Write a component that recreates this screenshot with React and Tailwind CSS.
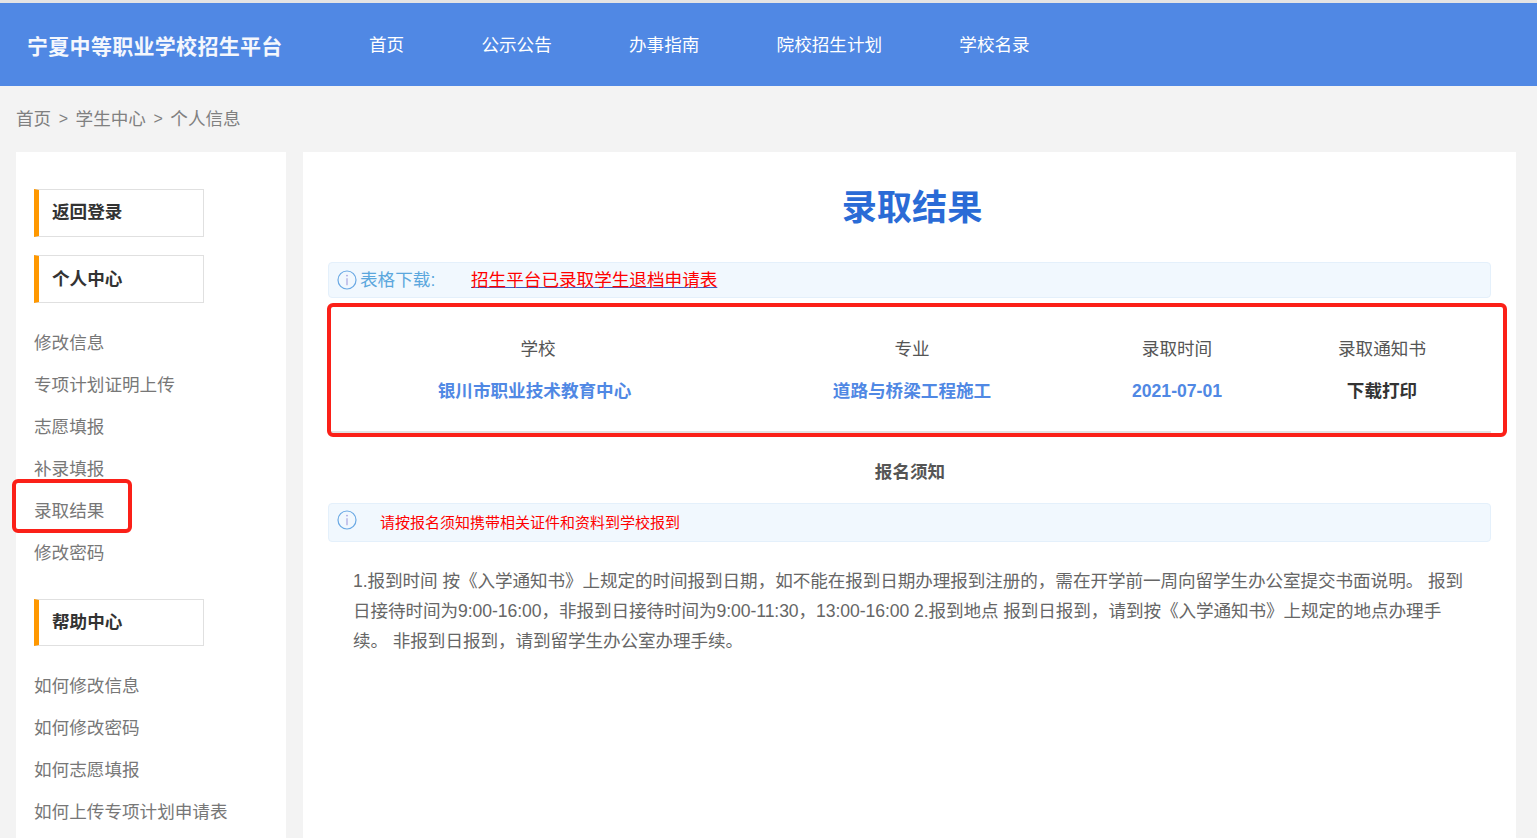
import React from 'react';

const navItems = ['首页', '公示公告', '办事指南', '院校招生计划', '学校名录'];
const personalLinks = ['修改信息', '专项计划证明上传', '志愿填报', '补录填报', '录取结果', '修改密码'];
const helpLinks = ['如何修改信息', '如何修改密码', '如何志愿填报', '如何上传专项计划申请表'];

const columns = [
  { title: '学校', value: '银川市职业技术教育中心', width: 'w-[418px]', titleClass: 'pl-[2px]', valueClass: 'text-[#5088e4] pr-[5px]' },
  { title: '专业', value: '道路与桥梁工程施工', width: 'w-[332px]', titleClass: '', valueClass: 'text-[#5088e4]' },
  { title: '录取时间', value: '2021-07-01', width: 'w-[198px]', titleClass: '', valueClass: 'text-[#5088e4]' },
  { title: '录取通知书', value: '下载打印', width: 'w-[212px]', titleClass: '', valueClass: 'text-[#333333]' },
];

function InfoIcon() {
  return (
    <svg className="w-5 h-5 shrink-0" viewBox="0 0 20 20" fill="none">
      <circle cx="10" cy="10" r="9" stroke="#6aa9e4" strokeWidth="1.2" />
      <circle cx="10" cy="5.6" r="0.9" fill="#a9a4e0" />
      <path d="M10 8.2v7" stroke="#a9a4e0" strokeWidth="1.2" />
    </svg>
  );
}

function SideHeading({ children, className }) {
  return (
    <div className={`w-[170px] h-12 bg-white border border-[#e0e0e0] border-l-[5px] border-l-[#ff9800] pl-[13px] flex items-center text-[17.6px] font-bold text-[#333333] ${className}`}>
      {children}
    </div>
  );
}

function SideLinks({ links, className }) {
  return (
    <ul className={className}>
      {links.map(link => (
        <li key={link} className="h-[42px] leading-[42px] text-[17.6px] text-[#777777]">{link}</li>
      ))}
    </ul>
  );
}

export default function App() {
  return (
    <div
      className="h-[838px] overflow-hidden bg-[#f3f3f3] border-t-[3px] border-t-[#e4e4e4]"
      style={{ fontFamily: '"Liberation Sans", "Noto Sans CJK SC", sans-serif' }}
    >
      <header className="h-[83px] bg-[#5088e4] flex items-center pl-[27px] text-white">
        <div className="w-[342px] pt-1 text-[21px] tracking-[0.3px] font-bold text-[#f4f7fd]">宁夏中等职业学校招生平台</div>
        <nav className="flex gap-[77.2px] pt-px text-[17.6px]">
          {navItems.map(item => <span key={item}>{item}</span>)}
        </nav>
      </header>

      <div className="h-[66px] pl-4 flex items-center text-[17.6px] text-[#808080]">
        <span>首页</span>
        <span className="mx-[7.5px] text-base">&gt;</span>
        <span>学生中心</span>
        <span className="mx-[7.5px] text-base">&gt;</span>
        <span>个人信息</span>
      </div>

      <div className="flex pl-4 gap-[17px] items-start">
        <aside className="relative w-[270px] h-[700px] bg-white pt-[37px] pl-[18px]">
          <SideHeading className="pb-px">返回登录</SideHeading>
          <SideHeading className="mt-[18px]">个人中心</SideHeading>
          <SideLinks links={personalLinks} className="mt-[19px]" />
          <SideHeading className="mt-[25px] h-[47px]">帮助中心</SideHeading>
          <SideLinks links={helpLinks} className="mt-[19px]" />
          <div className="absolute left-[-4px] top-[327px] w-[120px] h-[54px] border-[4px] border-[#fb2018] rounded-[6px]" />
        </aside>

        <main className="relative w-[1213px] h-[700px] bg-white pl-[25px]">
          <h1 className="h-[110px] pt-[2px] pr-[20px] flex items-center justify-center text-[35.2px] font-bold text-[#2a6bd6]">录取结果</h1>

          <div className="w-[1163px] h-9 bg-[#f1f8fe] border border-[#e4f0fb] rounded-sm flex items-center pl-2 text-[17.6px]">
            <InfoIcon />
            <span className="ml-[3px] w-[111px] text-[#5ba7dd]">表格下载:</span>
            <a className="text-[#ff0000] underline decoration-[#3f5fc0]">招生平台已录取学生退档申请表</a>
          </div>

          <div className="w-[1163px] h-[130px] mt-[5px] border-b-2 border-b-[#e2e2e2] flex text-center">
            {columns.map(col => (
              <div key={col.title} className={col.width}>
                <div className={`mt-[31px] h-[30px] leading-[30px] text-[17.6px] text-[#555555] ${col.titleClass}`}>{col.title}</div>
                <div className={`mt-3 h-[30px] leading-[30px] text-[17.6px] font-bold ${col.valueClass}`}>{col.value}</div>
              </div>
            ))}
          </div>

          <div className="h-[70px] pt-[8px] pr-[24px] flex items-center justify-center text-[17.6px] font-bold text-[#555555]">报名须知</div>

          <div className="w-[1163px] h-[39px] bg-[#f1f8fe] border border-[#e4f0fb] rounded-sm flex items-center pl-2 pb-[6px] text-[15px] text-[#ff0000]">
            <InfoIcon />
            <span className="ml-[23px] mt-2">请按报名须知携带相关证件和资料到学校报到</span>
          </div>

          <p className="w-[1115px] mt-[24px] ml-[25px] text-[17.6px] tracking-[-0.08px] leading-[30px] text-[#666666]">
            1.报到时间 按《入学通知书》上规定的时间报到日期，如不能在报到日期办理报到注册的，需在开学前一周向留学生办公室提交书面说明。 报到日接待时间为9:00-16:00，非报到日接待时间为9:00-11:30，13:00-16:00 2.报到地点 报到日报到，请到按《入学通知书》上规定的地点办理手续。 非报到日报到，请到留学生办公室办理手续。
          </p>

          <div className="absolute left-[24px] top-[151px] w-[1180px] h-[134px] border-[4px] border-[#fb2018] rounded-[6px]" />
        </main>
      </div>
    </div>
  );
}
